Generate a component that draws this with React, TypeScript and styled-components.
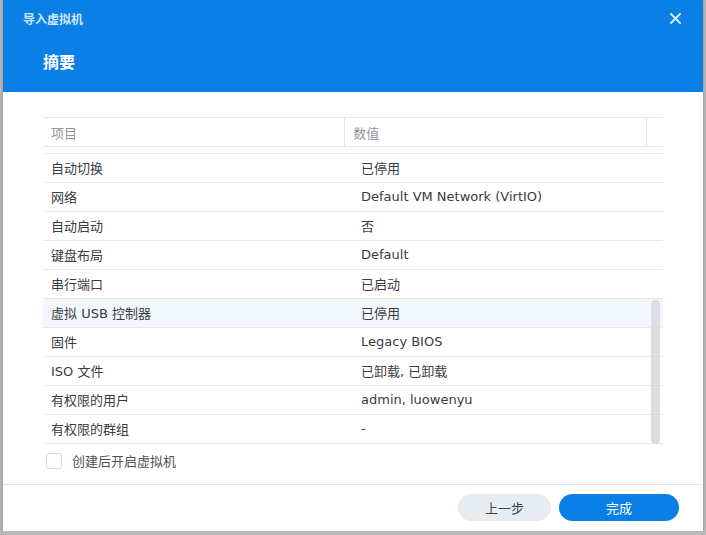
import React from 'react';
import styled, { createGlobalStyle } from 'styled-components';

const rows = [
  { id: 1, name: '自动切换', value: '已停用' },
  { id: 2, name: '网络', value: 'Default VM Network (VirtIO)' },
  { id: 3, name: '自动启动', value: '否' },
  { id: 4, name: '键盘布局', value: 'Default' },
  { id: 5, name: '串行端口', value: '已启动' },
  { id: 6, name: '虚拟 USB 控制器', value: '已停用', active: true },
  { id: 7, name: '固件', value: 'Legacy BIOS' },
  { id: 8, name: 'ISO 文件', value: '已卸载, 已卸载' },
  { id: 9, name: '有权限的用户', value: 'admin, luowenyu' },
  { id: 10, name: '有权限的群组', value: '-' },
];

const GlobalStyle = createGlobalStyle`
  html, body {
    margin: 0;
    padding: 0;
    background: #b9b9b9;
    font-family: "DejaVu Sans", "Noto Sans CJK SC", sans-serif;
    overflow: hidden;
  }
`;

const App = () => {
  return (
    <>
      <GlobalStyle />
      <Dialog>
        <Header>
          <TopBar>
            <WindowTitle>导入虚拟机</WindowTitle>
            <CloseButton>
              <svg width="11" height="11" viewBox="0 0 11 11">
                <path d="M1 1L10 10M10 1L1 10" stroke="#d6eafc" strokeWidth="2" strokeLinecap="round" />
              </svg>
            </CloseButton>
          </TopBar>
          <StepTitle>摘要</StepTitle>
        </Header>
        <Body>
          <Table>
            <HeadRow>
              <HeadCell>项目</HeadCell>
              <HeadCell $divider>数值</HeadCell>
              <HeadSpacer />
            </HeadRow>
            <Rows>
              <RowList>
                {rows.map(({ id, name, value, active }) => (
                  <Row key={id} $active={active}>
                    <Cell>{name}</Cell>
                    <Cell>{value}</Cell>
                  </Row>
                ))}
              </RowList>
              <ScrollTrack>
                <ScrollThumb />
              </ScrollTrack>
            </Rows>
          </Table>
          <CheckLine>
            <CheckBox />
            <CheckLabel>创建后开启虚拟机</CheckLabel>
          </CheckLine>
        </Body>
        <Footer>
          <Button>上一步</Button>
          <Button $primary>完成</Button>
        </Footer>
      </Dialog>
    </>
  );
};

export default App;

const Dialog = styled.div`
  margin-left: 3px;
  width: 700px;
  height: 531px;
  background: #fff;
  display: flex;
  flex-direction: column;
  box-shadow: 0 0 3px rgba(0, 0, 0, 0.3);
`;

const Header = styled.div`
  height: 92px;
  background: #0a7fe6;
  display: flex;
  flex-direction: column;
  box-sizing: border-box;
`;

const TopBar = styled.div`
  height: 36px;
  display: flex;
  align-items: center;
  justify-content: space-between;
  padding: 0 22px 0 20px;
`;

const WindowTitle = styled.div`
  font-size: 12px;
  font-weight: 700;
  color: #cfe5fb;
  font-family: "Noto Sans CJK SC", sans-serif;
`;

const CloseButton = styled.div`
  width: 11px;
  height: 11px;
  display: flex;
`;

const StepTitle = styled.div`
  margin-top: 14px;
  padding-left: 40px;
  font-size: 16px;
  font-weight: 700;
  color: #fff;
  line-height: 22px;
  font-family: "Noto Sans CJK SC", sans-serif;
`;

const Body = styled.div`
  flex: 1;
  padding: 25px 40px 0 40px;
  display: flex;
  flex-direction: column;
`;

const Table = styled.div`
  display: flex;
  flex-direction: column;
`;

const HeadRow = styled.div`
  display: flex;
  height: 28px;
  border-top: 1px solid #e3e6ea;
  border-bottom: 1px solid #e3e6ea;
`;

const HeadCell = styled.div<{ $divider?: boolean }>`
  width: 310px;
  box-sizing: border-box;
  padding-left: 8px;
  display: flex;
  align-items: center;
  font-size: 13px;
  color: #8e959c;
  border-left: ${(p) => (p.$divider ? '1px solid #e3e6ea' : 'none')};
  &:last-of-type {
    width: 293px;
  }
`;

const HeadSpacer = styled.div`
  width: 17px;
  border-left: 1px solid #e3e6ea;
`;

const Rows = styled.div`
  position: relative;
  margin-top: 6px;
  border-top: 1px solid #e6e9ec;
`;

const RowList = styled.div`
  display: flex;
  flex-direction: column;
`;

const Row = styled.div<{ $active?: boolean }>`
  display: flex;
  height: 28px;
  border-bottom: 1px solid #e6e9ec;
  background: ${(p) => (p.$active ? '#f2f7fd' : '#fff')};
`;

const Cell = styled.div`
  width: 310px;
  padding-left: 8px;
  padding-bottom: 2px;
  box-sizing: border-box;
  display: flex;
  align-items: center;
  font-size: 13px;
  color: #363c43;
  white-space: nowrap;
`;

const ScrollTrack = styled.div`
  position: absolute;
  right: 3px;
  top: 0;
  bottom: 0;
  width: 9px;
`;

const ScrollThumb = styled.div`
  position: absolute;
  top: 146px;
  bottom: 0;
  left: 0;
  right: 0;
  border-radius: 5px;
  background: #dcdde0;
`;

const CheckLine = styled.div`
  display: flex;
  align-items: center;
  margin-top: 7px;
  padding-left: 3px;
`;

const CheckBox = styled.div`
  width: 16px;
  height: 16px;
  border: 1px solid #d3d7dc;
  border-radius: 3px;
  box-sizing: border-box;
`;

const CheckLabel = styled.span`
  margin-left: 10px;
  font-size: 13px;
  color: #4a5159;
  font-family: "Noto Sans CJK SC", sans-serif;
`;

const Footer = styled.div`
  height: 45px;
  border-top: 1px solid #e2e5e8;
  display: flex;
  align-items: center;
  justify-content: flex-end;
  gap: 8px;
  padding-right: 24px;
  padding-bottom: 1px;
  font-family: "Noto Sans CJK SC", sans-serif;
`;

const Button = styled.div<{ $primary?: boolean }>`
  width: ${(p) => (p.$primary ? '120px' : '93px')};
  height: 27px;
  border-radius: 14px;
  display: flex;
  align-items: center;
  justify-content: center;
  font-size: 13px;
  background: ${(p) => (p.$primary ? '#0a7fe6' : '#e7ecf1')};
  color: ${(p) => (p.$primary ? '#fff' : '#3c434b')};
`;
